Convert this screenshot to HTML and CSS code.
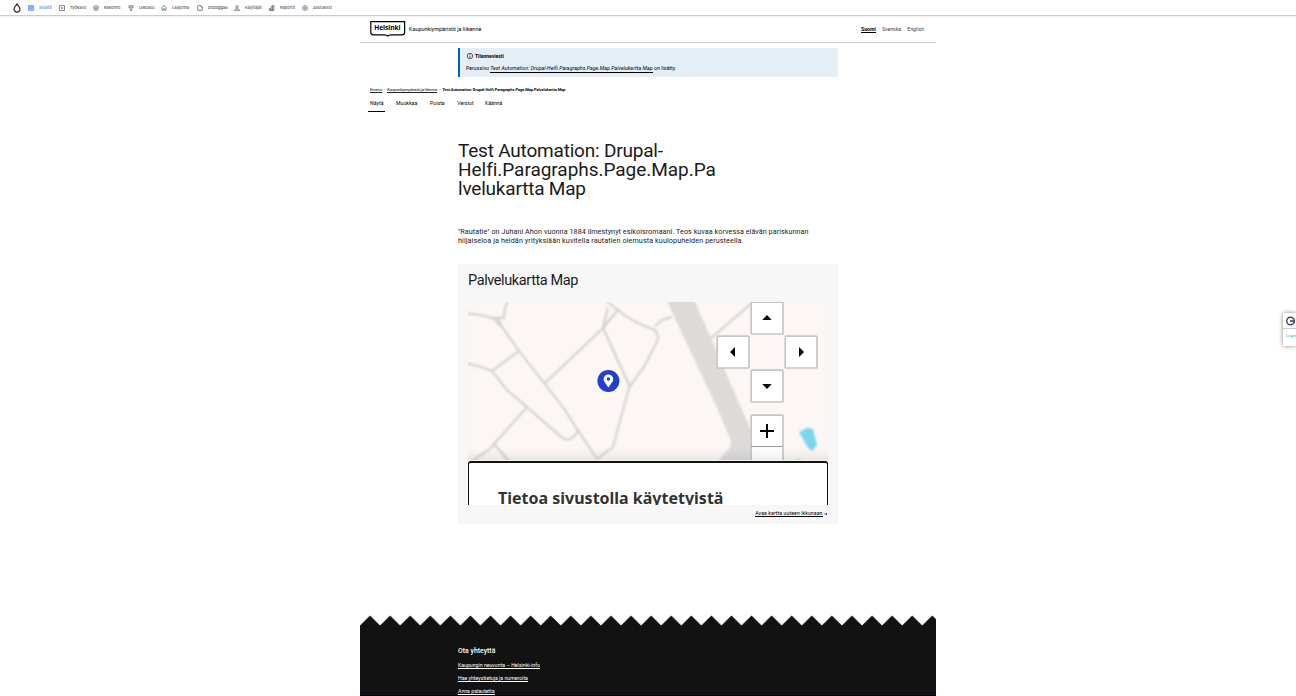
FILE: index.html
```html
<!DOCTYPE html>
<html lang="fi">
<head>
<meta charset="utf-8">
<title>Test Automation: Drupal-Helfi.Paragraphs.Page.Map.Palvelukartta Map</title>
<link rel="stylesheet" href="styles.css">
</head>
<body>
<nav class="toolbar">
  <svg class="drop" viewBox="0 0 8 10"><path d="M4 1 C5 3 7 4 7 6.2 A3 2.9 0 0 1 1 6.2 C1 4 3 3 4 1Z"/></svg>
  <a class="tool active"><svg viewBox="0 0 6 6"><path d="M.5.5h5v5h-5zM1 2h4M1 3.5h2.5M4 1v4" /></svg><span>Sisältö</span></a>
  <a class="tool"><svg viewBox="0 0 6 6"><path d="M.5.5h5v5h-5zM2 3h2M3 2v2"/></svg><span>Työkalut</span></a>
  <a class="tool"><svg viewBox="0 0 6 6"><path d="M3 .5L5.5 1.8 3 3 .5 1.8ZM.5 3L3 4.3 5.5 3M.5 4.2L3 5.5 5.5 4.2"/></svg><span>Rakenne</span></a>
  <a class="tool"><svg viewBox="0 0 6 6"><path d="M1 .7h4v2L3.6 3.8v1.7H2.4V3.8L1 2.7zM1 2.2h4"/></svg><span>Ulkoasu</span></a>
  <a class="tool"><svg viewBox="0 0 6 6"><path d="M1 5.3V2.5L2 1.3Q3 0 4 1.3L5 2.5v2.8H3.8V4Q3 3 2.2 4v1.3z"/></svg><span>Laajenna</span></a>
  <a class="tool"><svg viewBox="0 0 6 6"><path d="M.7.7h3.6l1 1v3.6H.7zM4 1v1h1"/></svg><span>Debuggaa</span></a>
  <a class="tool"><svg viewBox="0 0 6 6"><circle cx="3" cy="1.8" r="1.2"/><path d="M.6 5.4Q.8 3.6 3 3.6T5.4 5.4z"/></svg><span>Käyttäjät</span></a>
  <a class="tool"><svg viewBox="0 0 6 6"><path d="M.5 5.5V3.5H2v2zM2 5.5v-4h1.5v4zM3.5 5.5v-5H5v5z"/></svg><span>Raportit</span></a>
  <a class="tool"><svg viewBox="0 0 6 6"><circle cx="3" cy="3" r="2.4"/><circle cx="3" cy="3" r=".9"/></svg><span>Asetukset</span></a>
</nav>

<div class="page">
  <header class="header">
    <svg class="logo" viewBox="0 0 36 18"><path d="M.8 1.6H34.6V12.4Q34.6 14.8 32 14.8H21Q19 14.9 17.7 16Q16.4 14.9 14.4 14.8H3.4Q.8 14.8 .8 12.4Z"/><text x="4.2" y="10.3" textLength="26.4">Helsinki</text></svg>
    <span class="site">Kaupunkiympäristö ja liikenne</span>
    <div class="langs"><b>Suomi</b><span>Svenska</span><span>English</span></div>
  </header>

  <section class="notice">
    <h2><svg viewBox="0 0 8 8"><circle cx="4" cy="4" r="2.7"/><path d="M4 2.3v.7M4 3.5v2.2"/></svg><span>Tilanneviesti</span></h2>
    <p>Perussivu <a>Test Automation: Drupal-Helfi.Paragraphs.Page.Map.Palvelukartta Map</a> on lisätty.</p>
  </section>

  <div class="crumbs"><a>Etusivu</a><i>›</i><a>Kaupunkiympäristö ja liikenne</a><i>›</i><b>Test Automation: Drupal-Helfi.Paragraphs.Page.Map.Palvelukartta Map</b></div>
  <div class="tabs"><a class="current">Näytä</a><a>Muokkaa</a><a>Poista</a><a>Versiot</a><a>Käännä</a></div>

  <main class="content">
    <h1><span class="tight">Test Automation: Drupal-</span><br>Helfi.Paragraphs.Page.Map.Pa<br><span class="tight">lvelukartta Map</span></h1>
    <p class="lead">"Rautatie" on Juhani Ahon vuonna 1884 ilmestynyt esikoisromaani. Teos kuvaa korvessa elävän pariskunnan<br><span class="wide">hiljaiseloa ja heidän yrityksiään kuvitella rautatien olemusta kuulopuheiden perusteella.</span></p>

    <section class="card">
      <h2>Palvelukartta Map</h2>
      <div class="frame">
        <svg class="map" viewBox="468 302 360 159">
          <defs>
            <linearGradient id="fade" x1="0" y1="0" x2="0" y2="1"><stop offset="0" stop-color="#000" stop-opacity="0"/><stop offset="1" stop-color="#000" stop-opacity=".07"/></linearGradient>
            <filter id="soft" x="-5%" y="-5%" width="110%" height="110%"><feGaussianBlur stdDeviation=".8"/></filter>
          </defs>
          <rect x="468" y="302" width="360" height="159" fill="#fcf7f5"/>
          <g filter="url(#soft)">
            <path class="road" d="M666 299H694L742 410 752 432 755 465H714L726 452Q733 445 730 438L718 410Z"/>
            <path class="path" d="M464 313L481 315 492 318 504 318 505 308 508 300M493 318L502 327M498 319L502 327 519 351 545 384 565 410 579 432 597 459M578 429Q578 434 570 439Q566 441 560 436L527 407 507 390 492 371Q481 366 464 363M492 371L519 351M527 407L494 444 490 449 472 461M494 444L509 461M545 383L603 328 618 310 606 301M603 328L608 308M603 328L630 387M618 310Q632 322 650 328Q660 331 657 342L645 365 629 388 623 410 613 447 597 459M655 326L662 320 672 317M710 339L752 303"/>
            <path class="water" d="M799 432L807 428 813 429 817 445 812 451 808 448ZM796 461L799 459 802 461Z"/>
          </g>
          <circle cx="608.4" cy="381" r="11" fill="#2141cc"/>
          <path fill="#fff" fill-rule="evenodd" d="M608.4 387.5C606 383.5 603.6 381.8 603.6 379.2A4.8 4.8 0 0 1 613.2 379.2C613.2 381.8 610.8 383.5 608.4 387.5ZM608.4 377.3A1.7 1.7 0 1 0 608.4 380.7A1.7 1.7 0 1 0 608.4 377.3Z"/>
          <g class="control">
            <rect x="751.2" y="302.2" width="31.8" height="31.8" rx="1"/>
            <rect x="717.2" y="336.2" width="31.8" height="31.8" rx="1"/>
            <rect x="785.2" y="336.2" width="31.8" height="31.8" rx="1"/>
            <rect x="751.2" y="370.2" width="31.8" height="31.8" rx="1"/>
            <path d="M751.2 461V416Q751.2 415.2 752 415.2H782.2Q783 415.2 783 416V461"/>
          </g>
          <path stroke="#9c9999" stroke-width="1" d="M751 446.5H783"/>
          <path d="M762.3 320L767 315 771.7 320ZM735 347V357L730 352ZM799 347V357L804 352ZM762.3 384H771.7L767 389Z"/>
          <path stroke="#000" stroke-width="2" d="M760 431H774M767 424V438"/>
          <rect x="468" y="448" width="360" height="13" fill="url(#fade)"/>
          <rect x="468" y="460" width="360" height="1" fill="#f4f2f1"/>
        </svg>
        <div class="cookie">Tietoa sivustolla käytetyistä</div>
      </div>
      <div class="open"><a>Avaa kartta uuteen ikkunaan</a><svg viewBox="0 0 4 4"><path d="M.3 2H3M2 1.1L3 2 2 2.9"/></svg></div>
    </section>
  </main>

  <footer class="footer">
    <svg class="zigzag" viewBox="0 0 576 11"><defs><pattern id="wave" width="20.08" height="11" patternUnits="userSpaceOnUse"><path d="M0 11L0 10.5 10.04 .5 20.08 10.5V11Z" fill="#121212"/></pattern></defs><rect width="576" height="11" fill="url(#wave)"/></svg>
    <div class="contact">
      <h3>Ota yhteyttä</h3>
      <a>Kaupungin neuvonta – Helsinki-info</a>
      <a>Hae yhteystietoja ja numeroita</a>
      <a>Anna palautetta</a>
    </div>
  </footer>
</div>

<aside class="login"><svg viewBox="0 0 12 15"><circle cx="7.5" cy="8" r="3.8"/><path d="M7 8H11.5V10"/></svg><span>Login</span></aside>
</body>
</html>
```
FILE: styles.css
```css
* { box-sizing: border-box; margin: 0; padding: 0; }
html, body { height: 696px; overflow: hidden; }
body { background: #fff; color: #1a1a1a; font-family: Roboto, "Liberation Sans", sans-serif; position: relative; }
svg { display: block; flex: none; }
a { color: inherit; }

.toolbar { height: 16px; display: grid; grid-template-columns: 15px 31px 34px 35px 33px 36px 37px 35px 33px 36px; align-items: center; padding-left: 13px; border-bottom: 1px solid #ccc; box-shadow: 0 1px 0 #f3f3f3; }
.drop { width: 8px; height: 10px; fill: none; stroke: #222330; stroke-width: 1.2; }
.tool { display: flex; align-items: center; gap: 5px; font: 500 4px/6px Inter, sans-serif; color: #55565b; white-space: nowrap; }
.tool svg { width: 6px; height: 6px; fill: none; stroke: #6a6b70; stroke-width: .8; }
.tool.active { color: #4d8bf0; }
.tool.active svg { stroke: #6a9ff3; fill: #a9c8fa; }

.page { width: 576px; margin: 0 auto; }
.header { height: 27px; display: flex; align-items: center; padding: 0 12px 0 10px; border-bottom: 1px solid #ccc; }
.logo { width: 36px; height: 18px; fill: none; stroke: #000; stroke-width: 1.2; }
.logo text { font: 700 6.6px "Open Sans", sans-serif; fill: #000; stroke: none; }
.site { margin-left: 3px; font-size: 5.5px; letter-spacing: -.02px; color: #000; white-space: nowrap; }
.langs { margin-left: auto; display: flex; gap: 6px; font-size: 5.2px; line-height: 6px; color: #444; }
.langs b { color: #000; border-bottom: 1px solid #000; }

.notice { width: 380px; height: 29px; margin: 5px 0 0 98px; padding: 4px 0 0 6px; background: #e4eef7; border-left: 2px solid #0062b9; color: #000; }
.notice h2 { display: flex; align-items: center; gap: 1px; height: 8px; font-size: 5px; line-height: 8px; }
.notice h2 svg { width: 8px; height: 8px; fill: none; stroke: #1a1a1a; stroke-width: .7; }
.notice p { margin-top: 4px; font-size: 5.2px; letter-spacing: .03px; line-height: 8px; white-space: nowrap; }
.notice a { font-style: italic; letter-spacing: .055px; display: inline-block; line-height: 7px; border-bottom: 1px solid #000; }

.crumbs { display: flex; height: 6px; margin: 10px 0 0 10px; font-size: 4px; letter-spacing: -.1px; line-height: 5px; color: #000; white-space: nowrap; }
.crumbs a { border-bottom: 1px solid #222; }
.crumbs i { width: 5px; text-align: center; font-style: normal; }
.crumbs b { letter-spacing: -.09px; }
.tabs { display: grid; grid-template-columns: 28px 34px 27.3px 27.7px auto; height: 14px; margin: 5px 0 0 8px; font-size: 5.2px; line-height: 10px; color: #000; }
.tabs .current { width: 17px; padding-left: 2px; border-bottom: 1px solid #000; }

.content { width: 380px; margin-left: 98px; }
h1 { margin-top: 29px; font-size: 19px; font-weight: 400; letter-spacing: -.04px; line-height: 19px; white-space: nowrap; }
.tight { letter-spacing: -.2px; }
.lead { margin-top: 29px; font-size: 7.2px; letter-spacing: .055px; line-height: 9px; white-space: nowrap; }
.wide { letter-spacing: .105px; }
.card { height: 260px; margin-top: 19px; padding: 0 10px; background: #f7f7f7; }
.card h2 { height: 38px; padding-top: 8px; font-size: 14.5px; font-weight: 400; letter-spacing: -.4px; line-height: 18px; }
.frame { height: 203px; overflow: hidden; }
.map { width: 360px; height: 159px; }
.road { fill: #dddada; }
.path { fill: none; stroke: #d0cecd; stroke-width: 2; }
.water { fill: #78d7ee; }
.control { fill: #fff; stroke: #c8c5c4; stroke-width: 1.7; }
.cookie { height: 44px; padding: 23px 0 0 29px; background: #fff; border: 2px solid #101214; border-width: 2px 1px 0; border-radius: 3px 3px 0 0; font: 700 16px/24px "Noto Sans", sans-serif; color: #333; white-space: nowrap; }
.open { display: flex; justify-content: flex-end; align-items: center; gap: 1.5px; padding-top: 5px; font-size: 5.2px; line-height: 6px; color: #000; }
.open a { letter-spacing: .07px; border-bottom: 1px solid #000; }
.open svg { width: 4px; height: 4px; fill: none; stroke: #000; stroke-width: .6; }

.footer { margin-top: 91px; }
.zigzag { width: 576px; height: 11px; }
.contact { height: 70px; padding: 20px 0 0 98px; display: flex; flex-direction: column; align-items: flex-start; background: #121212; color: #fff; border-bottom: 1px solid #08000a; }
.contact h3 { font-size: 6.8px; letter-spacing: .05px; line-height: 10px; font-weight: 500; margin-bottom: 6px; }
.contact a { font-size: 5.2px; line-height: 6px; margin-bottom: 6px; border-bottom: 1px solid #fff; white-space: nowrap; }

.login { position: absolute; left: 1283px; top: 313px; width: 13px; height: 33px; background: #fff; box-shadow: 0 0 4px rgba(0,0,0,.5); color: #26a5bb; font: 4px/6px "Noto Sans", sans-serif; }
.login svg { width: 12px; height: 15px; fill: none; stroke: #39425f; stroke-width: 1.4; }
.login span { display: block; border-top: 1px solid #ccc; padding: 4px 0 0 3px; }
```
